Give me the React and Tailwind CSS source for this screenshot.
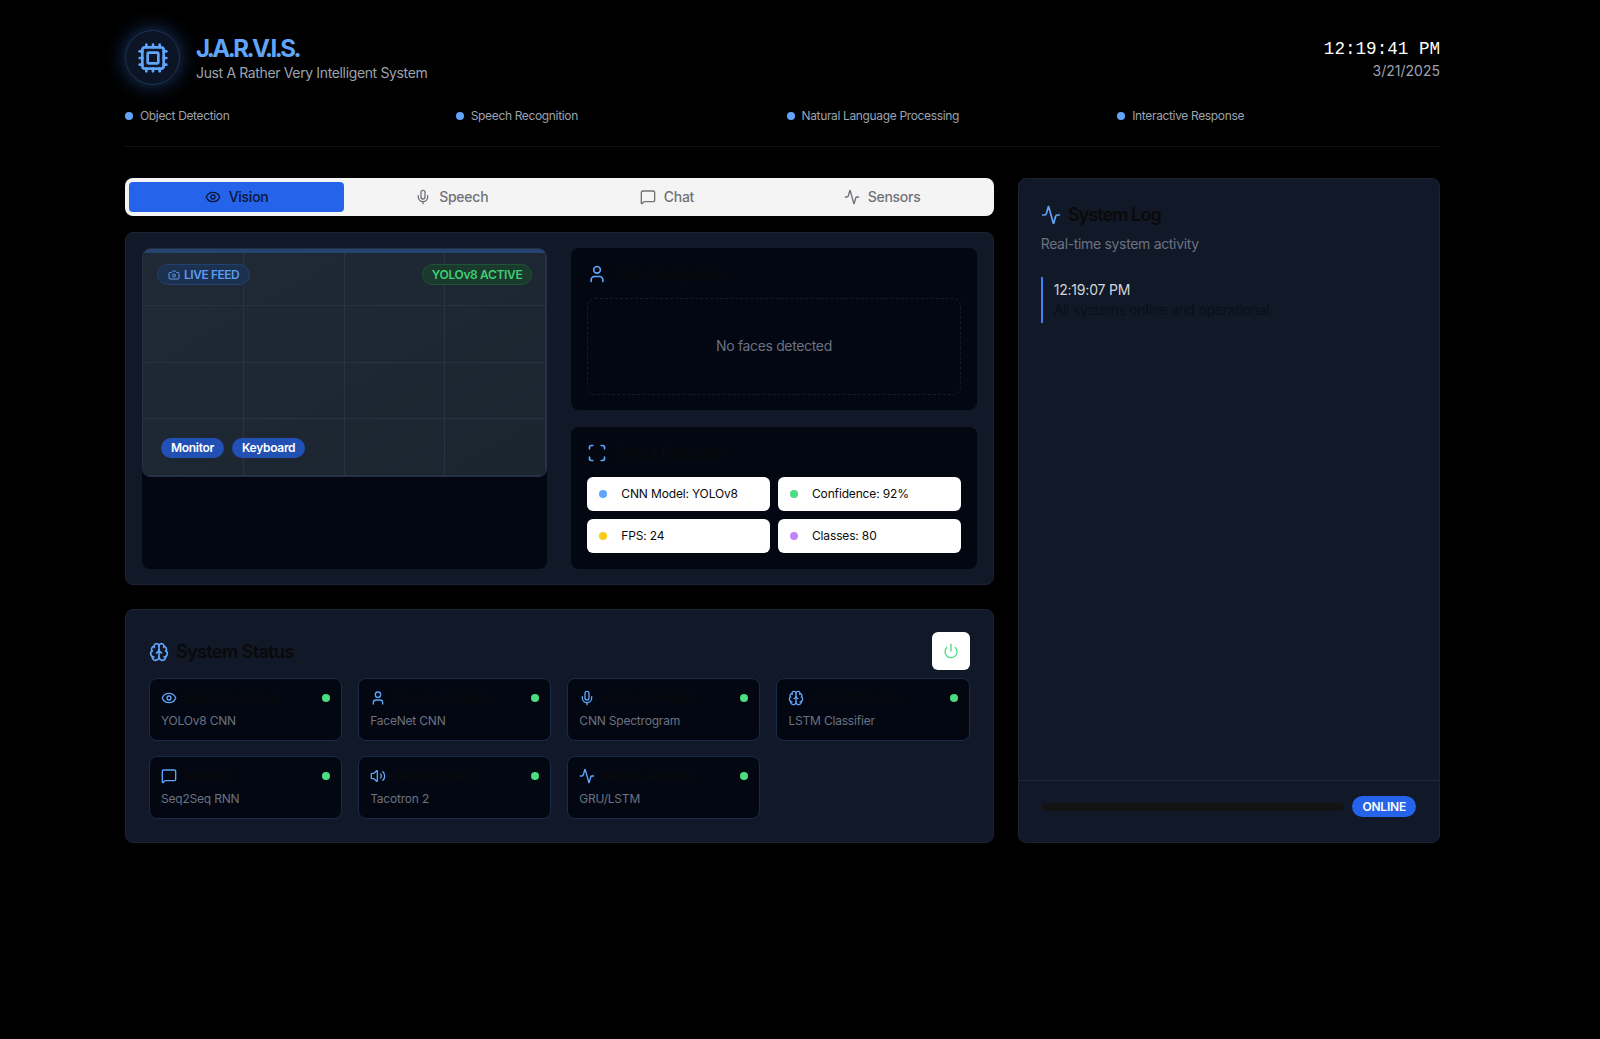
import React from 'react';
import { Activity, Brain, Camera, Cpu, Eye, MessageSquare, Mic, Power, Scan, User, Volume2 } from 'lucide-react';

const features = ['Object Detection', 'Speech Recognition', 'Natural Language Processing', 'Interactive Response'];

const tabs = [
  { name: 'Vision', icon: Eye, active: true },
  { name: 'Speech', icon: Mic },
  { name: 'Chat', icon: MessageSquare },
  { name: 'Sensors', icon: Activity },
];

const pills = [
  { text: 'CNN Model: YOLOv8', dot: 'bg-[#60a5fa]' },
  { text: 'Confidence: 92%', dot: 'bg-[#4ade80]' },
  { text: 'FPS: 24', dot: 'bg-[#facc15]' },
  { text: 'Classes: 80', dot: 'bg-[#c084fc]' },
];

const modules = [
  { name: 'Object Detection', model: 'YOLOv8 CNN', icon: Eye },
  { name: 'Face Recognition', model: 'FaceNet CNN', icon: User },
  { name: 'Voice Command', model: 'CNN Spectrogram', icon: Mic },
  { name: 'Intent Detection', model: 'LSTM Classifier', icon: Brain },
  { name: 'Chatbot', model: 'Seq2Seq RNN', icon: MessageSquare },
  { name: 'Neural Speech', model: 'Tacotron 2', icon: Volume2 },
  { name: 'Sensor Analysis', model: 'GRU/LSTM', icon: Activity },
];

const App = () => {
  return (
    <main className="min-h-screen w-full bg-black font-['Inter',sans-serif] text-white antialiased">
      <div className="w-[1440px] pl-[125px] pt-[30px]">
        {/* Header */}
        <header className="flex items-start justify-between">
          <div className="flex items-center gap-4">
            <div className="flex h-[55px] w-[55px] items-center justify-center rounded-full border border-[#1e3350] bg-[#0b1526] shadow-[0_0_20px_rgba(59,130,246,0.45)]">
              <Cpu className="h-8 w-8 text-[#60a5fa]" strokeWidth={2} />
            </div>
            <div>
              <h1 className="text-2xl font-bold leading-[31px] tracking-[-2.5px] text-[#60a5fa]">J.A.R.V.I.S.</h1>
              <p className="text-sm leading-[18px] tracking-[-0.36px] text-[#9ca3af]">Just A Rather Very Intelligent System</p>
            </div>
          </div>
          <div className="pt-[5px] text-right">
            <div className="font-['Liberation_Mono',monospace] text-[17.6px] leading-7 text-white">12:19:41 PM</div>
            <div className="text-sm leading-4 text-[#9ca3af]">3/21/2025</div>
          </div>
        </header>

        <div className="mt-[23px] grid grid-cols-4 gap-2 border-b border-[#111318] pb-[22px]">
          {features.map((f) => (
            <div key={f} className="flex h-4 items-center gap-[7px]">
              <span className="h-2 w-2 rounded-full bg-[#60a5fa]" />
              <span className="text-xs tracking-[-0.35px] text-[#9ca3af]">{f}</span>
            </div>
          ))}
        </div>

        <div className="mt-[31px] grid grid-cols-3 gap-6">
          <div className="col-span-2 flex flex-col">
            {/* Tabs */}
            <div className="grid h-[38px] grid-cols-4 rounded-lg bg-[#f4f4f5] p-1">
              {tabs.map((t) => {
                const Icon = t.icon;
                return (
                  <div
                    key={t.name}
                    className={`flex items-center justify-center gap-2 rounded-[4px] text-sm font-medium tracking-[-0.25px] ${t.active ? 'bg-[#2563eb] text-[#0a1633]' : 'text-[#71717a]'}`}
                  >
                    <Icon className="h-4 w-4" />
                    {t.name}
                  </div>
                );
              })}
            </div>

            {/* Vision panel */}
            <div className="mt-4 grid grid-cols-2 gap-6 rounded-lg border border-[#1a2333] bg-[#111827] px-4 pb-[15px] pt-[15px]">
              <div className="rounded-lg bg-[#030712]">
                <div className="relative h-[229px] overflow-hidden rounded-lg border border-[#243044] bg-gradient-to-br from-[#1f2a36] to-[#1b2530]">
                  <div className="grid h-full grid-cols-4 grid-rows-4">
                    {Array.from({ length: 16 }).map((_, i) => (
                      <div key={i} className="border-r border-b border-[#263347]" />
                    ))}
                  </div>
                  <div className="absolute inset-x-0 top-0 h-1 bg-[#26436f]" />
                  <div className="absolute left-[14px] top-[15px] flex h-[21px] items-center gap-1 rounded-full border border-[#24406f] bg-[#1c3050] px-[10px] text-xs font-semibold tracking-[-0.45px] text-[#5a9cf0]">
                    <Camera className="h-3 w-3" />
                    LIVE FEED
                  </div>
                  <div className="absolute right-[14px] top-[15px] flex h-[21px] items-center rounded-full border border-[#1f5238] bg-[#193a2c] px-[9px] text-xs font-semibold tracking-[-0.35px] text-[#3ecf74]">
                    YOLOv8 ACTIVE
                  </div>
                  <div className="absolute bottom-[18px] left-[18px] flex gap-2">
                    <span className="flex h-[20px] items-center rounded-full bg-[#2250b5] px-[10px] text-xs font-semibold tracking-[-0.3px] text-white">Monitor</span>
                    <span className="flex h-[20px] items-center rounded-full bg-[#2250b5] px-[10px] text-xs font-semibold tracking-[-0.3px] text-white">Keyboard</span>
                  </div>
                </div>
              </div>

              <div className="flex flex-col gap-[17px]">
                <div className="rounded-lg bg-[#030712] px-4 pb-[15px] pt-4">
                  <div className="flex h-[20px] items-center gap-2">
                    <User className="h-5 w-5 text-[#60a5fa]" />
                    <span className="text-sm font-medium tracking-[-0.3px] text-[#0a0a0a]">Face Recognition</span>
                  </div>
                  <div className="mt-[14px] flex h-[97px] items-center justify-center rounded-lg border border-dashed border-[#141c2b] pb-[2px] text-sm tracking-[-0.35px] text-[#6b7280]">
                    No faces detected
                  </div>
                </div>

                <div className="rounded-lg bg-[#030712] p-4">
                  <div className="flex h-[20px] items-center gap-2">
                    <Scan className="h-5 w-5 text-[#60a5fa]" />
                    <span className="text-sm font-medium tracking-[-0.3px] text-[#0a0a0a]">Object Detection</span>
                  </div>
                  <div className="mt-[14px] grid grid-cols-2 gap-2">
                    {pills.map((p) => (
                      <div key={p.text} className="flex h-[34px] items-center gap-[14px] rounded-md bg-white pl-3 text-xs tracking-[-0.15px] text-[#0a0a0a]">
                        <span className={`h-2 w-2 rounded-full ${p.dot}`} />
                        {p.text}
                      </div>
                    ))}
                  </div>
                </div>
              </div>
            </div>

            {/* System status */}
            <div className="mt-6 rounded-lg border border-[#1a2333] bg-[#111827] px-[23px] pb-[23px] pt-[22px]">
              <div className="flex items-center justify-between">
                <div className="flex items-center gap-[7px] pt-[2px]">
                  <Brain className="h-5 w-5 text-[#60a5fa]" />
                  <h2 className="text-lg font-semibold tracking-[-0.6px] text-[#0a0a0a]">System Status</h2>
                </div>
                <div className="flex h-[38px] w-[38px] items-center justify-center rounded-md bg-white">
                  <Power className="h-4 w-4 text-[#4ade80]" />
                </div>
              </div>
              <div className="mt-[8px] grid grid-cols-4 gap-x-4 gap-y-[15px]">
                {modules.map((m) => {
                  const Icon = m.icon;
                  return (
                    <div key={m.model} className="h-[63px] rounded-lg border border-[#1c2a4a] bg-[#030712] px-[11px] pt-[11px]">
                      <div className="flex h-4 items-center justify-between">
                        <div className="flex items-center gap-2">
                          <Icon className="h-4 w-4 text-[#60a5fa]" />
                          <span className="text-xs font-medium tracking-[-0.2px] text-[#0a0a0a]">{m.name}</span>
                        </div>
                        <span className="h-2 w-2 rounded-full bg-[#4ade80]" />
                      </div>
                      <p className="mt-[7px] text-xs leading-4 tracking-[-0.2px] text-[#6b7280]">{m.model}</p>
                    </div>
                  );
                })}
              </div>
            </div>
          </div>

          {/* System log */}
          <aside className="flex flex-col rounded-lg border border-[#1a2333] bg-[#111827]">
            <div className="flex-1 px-[22px] pt-[22px]">
              <div className="flex items-center gap-[7px]">
                <Activity className="h-5 w-5 text-[#60a5fa]" />
                <h2 className="text-lg font-semibold tracking-[-0.9px] text-[#0a0a0a]">System Log</h2>
              </div>
              <p className="mt-[5px] text-sm tracking-[-0.33px] text-[#6b7280]">Real-time system activity</p>
              <div className="mt-[23px] border-l-2 border-[#3b82f6] py-[3px] pl-[11px]">
                <div className="text-sm leading-5 tracking-[-0.2px] text-[#d1d5db]">12:19:07 PM</div>
                <div className="text-sm leading-5 tracking-[-0.3px] text-[#0a0f1a]">All systems online and operational.</div>
              </div>
            </div>
            <div className="flex h-[62px] items-center gap-2 border-t border-[#1f2937] px-[23px] pb-[10px]">
              <div className="h-2 flex-1 rounded-full bg-[#131313]" />
              <span className="flex h-[21px] items-center rounded-full bg-[#2563eb] px-[10px] text-xs font-semibold tracking-[-0.2px] text-white">ONLINE</span>
            </div>
          </aside>
        </div>
      </div>
    </main>
  );
};

export default App;
